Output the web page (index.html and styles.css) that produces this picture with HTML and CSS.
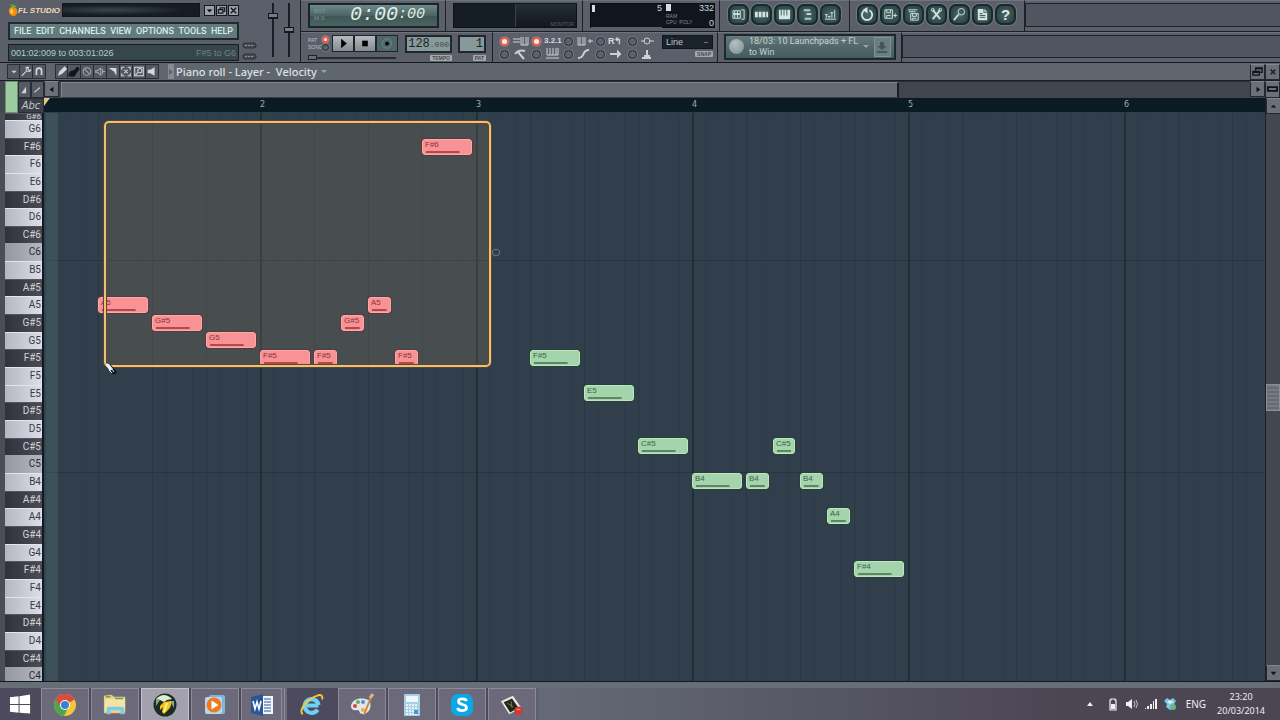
FILE: index.html
```html
<!DOCTYPE html>
<html lang="en">
<head>
<meta charset="utf-8">
<title>FL Studio - Piano roll</title>
<link rel="stylesheet" href="styles.css">
</head>
<body>
<header class="toolbar">
  <section class="main-panel">
    <div class="main-left">
      <div class="brand-row">
        <svg class="fruit" viewBox="0 0 11 15"><path d="M4 4C1 5 0 9 2 12s6 3 8-1c1-4-2-8-6-7z" fill="#f98a12"/><path d="M4 6c-2 2-2 5 0 6 2-1 3-4 0-6z" fill="#ffd34a"/><path d="M5 5L2 1l3 1 1-2 1 3 3-1-3 4z" fill="#5fb335"/></svg>
        <span class="brand">FL STUDIO</span>
        <span class="brand-display"></span>
        <span class="win-buttons">
          <button class="mini" aria-label="Minimize"><svg viewBox="0 0 10 10"><path d="M2 4h6L5 7z"/></svg></button>
          <button class="mini" aria-label="Restore"><svg viewBox="0 0 10 10"><path d="M3.500 4V2h5v4H7M1.500 4h5v4h-5z" fill="none" stroke="#15171c" stroke-width="1.300"/></svg></button>
          <button class="mini" aria-label="Close"><svg viewBox="0 0 10 10"><path d="M2 2l6 6M8 2L2 8" stroke="#15171c" stroke-width="1.500"/></svg></button>
        </span>
      </div>
      <nav class="menu">
        <button>FILE</button><button>EDIT</button><button>CHANNELS</button><button>VIEW</button><button>OPTIONS</button><button>TOOLS</button><button>HELP</button>
      </nav>
      <div class="hint"><span>001:02:009 to 003:01:026</span><span class="hint-range">F#5 to G6</span></div>
    </div>
    <div class="main-lights">
      <svg viewBox="0 0 16 22"><g fill="#474b54" stroke="#2c3037"><rect x="1" y="3" width="13" height="5" rx="2"/><rect x="1" y="14" width="13" height="5" rx="2"/></g><path d="M3 5.500h9M3 16.500h9" stroke="#90969c" stroke-dasharray="2 1"/></svg>
    </div>
    <div class="sliders">
      <input type="range" class="vslider" aria-label="Main volume" min="0" max="100" value="80">
      <input type="range" class="vslider" aria-label="Main pitch" min="0" max="100" value="51">
    </div>
  </section>
  <div class="panels">
    <div class="panel-row">
      <section class="panel time-panel"><div class="time"><span class="time-mode">BST<br>M:S</span><span class="time-big">0:00</span><span class="time-small">:00</span></div></section>
      <section class="panel scope-panel"><div class="scope"><span></span><span class="scope-label">MONITOR</span></div></section>
      <section class="panel cpu-panel"><div class="cpu"><div class="cpu-left"><span class="bar"></span><span>5</span></div><div class="cpu-right"><span class="cpu-mem"><i class="block"></i>332</span><span class="cpu-dim">RAM</span><span class="cpu-mem"><span class="cpu-dim">CPU &nbsp;POLY</span>0</span></div></div></section>
      <section class="panel shortcuts views">
        <button class="orb" aria-label="Playlist"><svg viewBox="0 0 16 16"><path d="M2 4h8v3H2zM2 8h8v4H2zM11 3h3v10h-3M4 4v8M7 4v8"/></svg></button>
        <button class="orb" aria-label="Step sequencer"><svg viewBox="0 0 16 16"><path class="solid" d="M1 5h3v6H1zM5 5h3v6H5zM9 5h3v6H9zM13 5h2v6h-2z"/></svg></button>
        <button class="orb" aria-label="Piano roll"><svg viewBox="0 0 16 16"><path class="solid" d="M2 3h2v6h1V3h2v6h1V3h2v6h1V3h3v10H2z"/></svg></button>
        <button class="orb" aria-label="Browser"><svg viewBox="0 0 16 16"><path d="M4 3h7M4 4h7M7 7h5M7 8h5M5 12h7M5 13h7"/></svg></button>
        <button class="orb" aria-label="Mixer"><svg viewBox="0 0 16 16"><path d="M2 13h12M3.500 8v4M6.500 10v2M9.500 6v6M12.500 3v9M2 8h3M5 10h3M8 6h3"/></svg></button>
      </section>
      <section class="panel shortcuts tools">
        <button class="orb" aria-label="Undo"><svg viewBox="0 0 16 16"><path class="thick" d="M5 3.500a5.500 5.500 0 1 0 5 0"/><path class="solid" d="M8 0L3 3l5 4z"/></svg></button>
        <button class="orb" aria-label="Save as"><svg viewBox="0 0 16 16"><path d="M2 3h8v9H2zM4 3v3h4V3M4 12V9h4M11 9h4M13 7v4"/></svg></button>
        <button class="orb" aria-label="Save"><svg viewBox="0 0 16 16"><path d="M5 7h8v7H5zM7 7v3h4V7M7 14v-2h4M2 3h10M3 5h7"/></svg></button>
        <button class="orb" aria-label="Cut"><svg viewBox="0 0 16 16"><path class="thick" d="M4 3l8 10M12 3L4 13"/><circle cx="4" cy="3" r="1.500"/><circle cx="12" cy="3" r="1.500"/></svg></button>
        <button class="orb" aria-label="Find"><svg viewBox="0 0 16 16"><circle cx="10" cy="5" r="3.500"/><path class="thick" d="M7 8l-5 6"/></svg></button>
        <button class="orb" aria-label="Project info"><svg viewBox="0 0 16 16"><path class="solid" d="M3 2h6v4h4v8H3zM10 2l3 3h-3z"/><path d="M5 7h3M5 9h6M5 11h6" stroke="#34504f"/></svg></button>
        <button class="orb help" aria-label="Help">?</button>
      </section>
      <section class="panel empty"><div></div></section>
    </div>
    <div class="panel-row">
      <section class="panel transport">
        <div class="transport-main">
          <div class="transport-top">
            <span class="patsong"><span>PAT</span><span>SONG</span></span>
            <span class="leds"><input type="radio" class="led" name="mode" aria-label="Pattern mode" checked><input type="radio" class="led" name="mode" aria-label="Song mode"></span>
            <button class="play" aria-label="Play"><svg viewBox="0 0 20 16"><path d="M8 3l6 5-6 5z"/></svg></button>
            <button class="play" aria-label="Stop"><svg viewBox="0 0 20 16"><path d="M7 5h6v6H7z"/></svg></button>
            <button class="play record" aria-label="Record"><svg viewBox="0 0 20 16"><circle cx="10" cy="8" r="5" fill="none" stroke="#72868a"/><circle cx="10" cy="8" r="2"/></svg></button>
          </div>
          <input type="range" class="hslider" aria-label="Song position" min="0" max="100" value="0">
        </div>
        <div class="lcd-group"><span class="lcd">128<small>.000</small></span><span class="tag">TEMPO</span></div>
        <div class="lcd-group pat"><span class="lcd">1</span><span class="tag">PAT</span></div>
      </section>
      <section class="panel toggles">
        <div class="toggle-grid">
          <label><input type="checkbox" class="led" aria-label="Typing keyboard" checked><svg viewBox="0 0 18 12"><path d="M1 4h7M1 7h7M9 2v8h7V2M11 2v8M14 2v8"/></svg></label>
          <label><input type="checkbox" class="led" aria-label="Countdown" checked><span class="count">3.2.1</span></label>
          <label><input type="checkbox" class="led" aria-label="Blend notes"><svg viewBox="0 0 18 12"><path d="M2 2v8h7V2M4 2v8M7 2v8M12 6h5M14 4v4"/></svg></label>
          <label><input type="checkbox" class="led" aria-label="Loop record"><span class="loop">R↰</span></label>
          <label><input type="checkbox" class="led" aria-label="Link"><svg viewBox="0 0 18 12"><path d="M1 6h4M9 6h5"/><circle cx="7" cy="6" r="3"/></svg></label>
          <label><input type="checkbox" class="led" aria-label="Metronome"><svg viewBox="0 0 18 12"><path class="wide" d="M3 6c3-4 6-4 10-3M6 4l6 7"/></svg></label>
          <label><input type="checkbox" class="led" aria-label="Wait"><svg viewBox="0 0 18 12"><path d="M3 0v7h11V0M6 0v7M9 0v7M12 0v7M2 10h13"/></svg></label>
          <label><input type="checkbox" class="led" aria-label="Slide"><svg viewBox="0 0 18 12"><path class="wide" d="M2 10c8 0 3-8 11-8"/></svg></label>
          <label><input type="checkbox" class="led" aria-label="Step edit"><svg viewBox="0 0 18 12"><path class="wide" d="M2 6h9M10 4l2 2-2 2z"/></svg></label>
          <label><input type="checkbox" class="led" aria-label="Multilink"><svg viewBox="0 0 18 12"><path class="wide" d="M2 10h9M7 2v6M4 8h6"/></svg></label>
        </div>
        <div class="snap"><select aria-label="Snap"><option>Line</option></select><span class="tag">SNAP</span></div>
      </section>
      <section class="panel news"><div class="news-box">
        <span class="globe"></span><span class="news-text">18/03: 10 Launchpads + FL<br>to Win</span><span class="caret"></span>
        <button class="download" aria-label="Download"><svg viewBox="0 0 14 14"><path d="M5 2h4v4h3l-5 4-5-4h3zM2 11h10v2H2z"/></svg></button>
      </div></section>
      <section class="panel empty"><div></div></section>
    </div>
  </div>
</header>

<main class="window">
  <div class="titlebar">
    <span class="tool-set">
      <button class="tool" aria-label="Options"><svg viewBox="0 0 14 14"><path class="fill" d="M4 6h6L7 9z"/></svg></button>
      <button class="tool" aria-label="Tools"><svg viewBox="0 0 14 14"><path d="M2 12l6-6M7 3c0 3 1 4 4 4l2-2-2 1-2-2 1-2c-2 0-3 0-3 1z"/></svg></button>
      <button class="tool" aria-label="Snap to grid"><svg viewBox="0 0 14 14"><path d="M4 11V6c0-4 6-4 6 0v5" stroke-width="2"/></svg></button>
    </span>
    <span class="tool-set">
      <button class="tool active" aria-label="Draw"><svg viewBox="0 0 14 14"><path class="fill" d="M2 12l2-5 6-6 3 3-6 6z"/></svg></button>
      <button class="tool" aria-label="Paint"><svg viewBox="0 0 14 14"><path class="dark" d="M1 12c0-5 4-6 6-6l4-4 2 2-4 5c0 4-4 4-8 3z"/></svg></button>
      <button class="tool" aria-label="Delete"><svg viewBox="0 0 14 14"><g class="dim"><circle cx="7" cy="7" r="4.500"/><path d="M4 4l6 6"/></g></svg></button>
      <button class="tool" aria-label="Mute"><svg viewBox="0 0 14 14"><path class="dim" d="M2 6h2l4-3v8L4 8H2zM10 4v6M10 7h3"/></svg></button>
      <button class="tool" aria-label="Slice"><svg viewBox="0 0 14 14"><path class="fill" d="M2 3h9v9L8 7z"/></svg></button>
      <button class="tool" aria-label="Select"><svg viewBox="0 0 14 14"><path d="M2 5V2h3M9 2h3v3M12 9v3H9M5 12H2V9M5 5l4 4M9 5L5 9"/></svg></button>
      <button class="tool" aria-label="Zoom"><svg viewBox="0 0 14 14"><path d="M2 2h10v10H2z"/><circle cx="8" cy="6" r="2.500"/><path d="M6 8l-3 3"/></svg></button>
      <button class="tool" aria-label="Playback"><svg viewBox="0 0 14 14"><path class="fill" d="M2 5h3l5-3v10L5 9H2z"/></svg></button>
    </span>
    <button class="expand" aria-label="Expand"><svg viewBox="0 0 6 14"><path d="M1 4l4 3-4 3z"/></svg></button>
    <h1>Piano roll - Layer -&nbsp; Velocity <span class="caret"></span></h1>
    <span class="window-buttons">
      <button class="cell" aria-label="Restore"><svg viewBox="0 0 14 14"><path d="M5 6V3h7v5h-2M2 7h7v4H2zM2 8h7M5 4h7" fill="none" stroke="#101318" stroke-width="1.400"/></svg></button>
      <button class="cell" aria-label="Close"><svg viewBox="0 0 14 14"><path d="M5 5l5 5M10 5l-5 5" stroke="#20242a" stroke-width="1.600"/></svg></button>
    </span>
  </div>

  <div class="corner">
    <span class="channel-color"></span>
    <span class="corner-tools">
      <button aria-label="Ramp"><svg viewBox="0 0 14 14"><path d="M3 11l6-8v8z" fill="#cfd3d6"/></svg></button>
      <button aria-label="Line"><svg viewBox="0 0 14 14"><path d="M3 10l7-6" stroke="#cfd3d6" stroke-width="1.600"/></svg></button>
      <button class="abc">Abc</button>
    </span>
  </div>
  <div class="hscroll">
    <button class="cell" aria-label="Scroll left"><svg viewBox="0 0 14 14"><path d="M9 4v6L5 7z"/></svg></button>
    <div class="hscroll-track"><span class="hscroll-thumb"></span></div>
    <button class="cell" aria-label="Scroll right"><svg viewBox="0 0 14 14"><path d="M6 4v6l4-3z"/></svg></button>
  </div>
  <button class="cell zoom-cell" aria-label="Zoom"><svg viewBox="0 0 14 14"><path d="M2 4.500h10v4H2z" fill="none" stroke="#101318" stroke-width="2"/></svg></button>
  <div class="ruler"><span class="marker"></span><span>2</span><span>3</span><span>4</span><span>5</span><span>6</span></div>

  <div class="keys">
    <div class="octave partial">
      <span class="black">G#6</span><span>G6</span><span class="black">F#6</span><span>F6</span><span>E6</span><span class="black">D#6</span><span>D6</span><span class="black">C#6</span><span class="c">C6</span>
    </div>
    <div class="octave">
      <span>B5</span><span class="black">A#5</span><span>A5</span><span class="black">G#5</span><span>G5</span><span class="black">F#5</span><span>F5</span><span>E5</span><span class="black">D#5</span><span>D5</span><span class="black">C#5</span><span class="c">C5</span>
    </div>
    <div class="octave">
      <span>B4</span><span class="black">A#4</span><span>A4</span><span class="black">G#4</span><span>G4</span><span class="black">F#4</span><span>F4</span><span>E4</span><span class="black">D#4</span><span>D4</span><span class="black">C#4</span><span class="c">C4</span>
    </div>
  </div>

  <div class="canvas">
    <div class="selection-fill"></div>
    <div class="note pink" style="left:54px;top:184px;width:50px">A5</div>
    <div class="note pink" style="left:108px;top:202px;width:50px">G#5</div>
    <div class="note pink" style="left:162px;top:219px;width:50px">G5</div>
    <div class="note pink" style="left:216px;top:237px;width:50px">F#5</div>
    <div class="note pink" style="left:270px;top:237px;width:23px">F#5</div>
    <div class="note pink" style="left:297px;top:202px;width:23px">G#5</div>
    <div class="note pink" style="left:324px;top:184px;width:23px">A5</div>
    <div class="note pink" style="left:351px;top:237px;width:23px">F#5</div>
    <div class="note pink" style="left:378px;top:26px;width:50px">F#6</div>
    <div class="note" style="left:486px;top:237px;width:50px">F#5</div>
    <div class="note" style="left:540px;top:272px;width:50px">E5</div>
    <div class="note" style="left:594px;top:325px;width:50px">C#5</div>
    <div class="note" style="left:648px;top:360px;width:50px">B4</div>
    <div class="note" style="left:702px;top:360px;width:23px">B4</div>
    <div class="note" style="left:729px;top:325px;width:22px">C#5</div>
    <div class="note" style="left:756px;top:360px;width:23px">B4</div>
    <div class="note" style="left:783px;top:395px;width:23px">A4</div>
    <div class="note" style="left:810px;top:448px;width:50px">F#4</div>
    <div class="selection"></div>
    <span class="ring"></span>
    <svg class="cursor" viewBox="0 0 14 14"><path d="M1 1l5 1 7 8-3 3-7-7z" fill="#10171d"/><path d="M1 1l4 1 4 5-3 2-4-5z" fill="#f4f1ee"/><path d="M5 8l3 3M7 6l3 4" stroke="#e4e4e4"/></svg>
  </div>
  <div class="vscroll">
    <button class="cell" aria-label="Scroll up"><svg viewBox="0 0 14 14"><path d="M4 8h6L7 5z"/></svg></button>
    <div class="vscroll-track"><span class="vscroll-thumb"></span></div>
    <button class="cell" aria-label="Scroll down"><svg viewBox="0 0 14 14"><path d="M4 5h6L7 9z"/></svg></button>
  </div>
</main>

<footer class="taskbar">
  <button class="start" aria-label="Start"><svg viewBox="0 0 24 22"><path fill="#fff" d="M1 4l9-1v8H1zM11 3l11-2v10H11zM1 12h9v8l-9-1zM11 12h11v9l-11-1z"/></svg></button>
  <button class="task" aria-label="Chrome"><svg viewBox="0 0 24 24"><circle cx="12" cy="12" r="11" fill="#f2c53b"/><path d="M12 12L2.500 6.500A11 11 0 0 1 21.500 6.500z" fill="#dd4b3e"/><path d="M2.500 6.500A11 11 0 0 0 11 23l4-8-6-1z" fill="#4aa653"/><path d="M12 6.500h9.500a11 11 0 0 0-19-.1L8 14z" fill="#dd4b3e"/><circle cx="12" cy="12" r="5" fill="#fff"/><circle cx="12" cy="12" r="4" fill="#3b80d0"/></svg></button>
  <button class="task" aria-label="Explorer"><svg viewBox="0 0 26 24"><path d="M1 2l8-1 3 2h12v18H1z" fill="#e2cc86"/><path d="M2 5h22v14H2z" fill="#f3e3a4"/><path d="M3 3h5M13 5h9" stroke="#6aa24c" stroke-width="1.500"/><path d="M4 22v-6q0-2 2-2h15q2 0 2 2v6h-4v-4H8v4z" fill="#7fcbe6"/></svg></button>
  <button class="task current" aria-label="FL Studio"><svg viewBox="0 0 24 24"><circle cx="12" cy="12" r="11.500" fill="#1d2d26"/><path d="M3 6q8-8 16 0l-5 1-3 2-4-2z" fill="#dfeccf"/><path d="M3 6l4 1-4 6zM21 8l-4 0 4 7z" fill="#8ba786"/><path d="M7 13l4-4 7-1q1 4-2 8l-5 5-2-2 1-5-3 3z" fill="#f5c518"/><path d="M14 10l-3 9" stroke="#fff09a" stroke-width="2"/></svg></button>
  <button class="task" aria-label="Media player"><svg viewBox="0 0 24 24"><rect x="6" y="2" width="16" height="19" rx="2" fill="#7fb6dd"/><rect x="2" y="4" width="17" height="17" rx="2" fill="#b9d8ec"/><circle cx="11" cy="12" r="7.500" fill="#ee7b22"/><path d="M8.500 7.500l7 4.500-7 4.500z" fill="#fff"/></svg></button>
  <button class="task stacked" aria-label="Word"><svg viewBox="0 0 24 24"><path d="M11 3h12v18H11z" fill="#f2f5fa"/><path d="M14 6h7M14 9h7M14 12h7M14 15h7M14 18h7" stroke="#2a5699"/><path d="M1 4l12-3v22L1 20z" fill="#2a5699"/><path d="M3 8l2 8 2-7 2 7 2-8" fill="none" stroke="#fff" stroke-width="1.600"/></svg></button>
  <button class="task plain" aria-label="Internet Explorer"><svg viewBox="0 0 26 24"><path d="M5 12.500h15M20 12a7.500 7.500 0 1 0-1 5" fill="none" stroke="#6fd0f5" stroke-width="4.500"/><path d="M3 22C-2 18 8 5 18 2c5-2 7 0 6 4" fill="none" stroke="#f1cb34" stroke-width="2"/></svg></button>
  <button class="task" aria-label="Paint"><svg viewBox="0 0 24 24"><path d="M1 13C2 5 12 4 19 7c4 6 0 14-6 14-5 0-2-4-6-4-4 1-6-1-6-4z" fill="#e3e5e6"/><circle cx="5" cy="13" r="2" fill="#d6493f"/><circle cx="8" cy="9" r="2" fill="#5bb05b"/><circle cx="13" cy="9" r="2" fill="#4b92d1"/><circle cx="13" cy="17" r="2" fill="#e6b04a"/><path d="M14 22l7-18" stroke="#c98846" stroke-width="2"/><path d="M20 5l3-4" stroke="#dcb184" stroke-width="3"/></svg></button>
  <button class="task" aria-label="Calculator"><svg viewBox="0 0 24 24"><rect x="4" y="1" width="16" height="22" rx="1" fill="#a9cfe6"/><path d="M6 3h12v6H6z" fill="#eef6fb"/><path d="M6 12h12M6 15h12M6 18h12M6 21h12" stroke="#e6f2f9" stroke-width="2" stroke-dasharray="2 1"/><path d="M14 17h4v4h-4z" fill="#4f95c8"/></svg></button>
  <button class="task" aria-label="Skype"><svg viewBox="0 0 24 24"><rect x="1" y="1" width="22" height="22" rx="7" fill="#0aa8e6"/><path d="M16.500 8c-1-3-8-3-8 .5 0 4 8 2 8 6 0 4-8 4-9 .5" fill="none" stroke="#fff" stroke-width="2.800"/></svg></button>
  <button class="task" aria-label="Screen recorder"><svg viewBox="0 0 26 24"><path d="M1 8l13-6 9 13-13 7z" fill="#e7e7e4"/><path d="M4 9l9-4 7 10-9 5z" fill="#1d281a"/><path d="M8 10l6 4M12 8l1 7" stroke="#6f8c4a"/><circle cx="20" cy="18" r="4.500" fill="#d8362f"/><path d="M18 17h4" stroke="#f3a29c"/></svg></button>
  <div class="tray">
    <svg class="tray-arrow" viewBox="0 0 8 8"><path d="M1 6h6L4 2z"/></svg>
    <svg viewBox="0 0 14 14"><path d="M5 2h4v1h1v10H4V3h1z" fill="none" stroke="#f0eef2" stroke-width="1.200"/><path d="M5 7h4v5H5z"/></svg>
    <svg viewBox="0 0 14 14"><path d="M1 5h2l4-3v10L3 9H1z"/><path d="M9 4q2 3 0 6M11 3q3 4 0 8" fill="none" stroke="#c4c0c8"/></svg>
    <svg viewBox="0 0 14 14"><path d="M1 11h1v1H1zM3 9h2v3H3zM6 7h2v5H6zM9 4h1v8H9zM11 2h2v10h-2z"/></svg>
    <svg viewBox="0 0 14 14"><path fill="#7cc9e4" d="M1 4l3-3 3 2 3-2 3 3-2 3 1 3-5 3-4-3 1-3z"/><path fill="#d9f0f8" d="M4 5l3-2 3 2-3 2z"/><circle cx="10" cy="10" r="3" fill="#6bb38b"/></svg>
    <span class="lang">ENG</span>
    <time class="clock">23:20<br>20/03/2014</time>
  </div>
</footer>
</body>
</html>
```
FILE: styles.css
```css
* { box-sizing: border-box; }
body {
  margin: 0;
  height: 100vh;
  display: flex;
  flex-direction: column;
  overflow: hidden;
  background: #50555e;
  font-family: "Liberation Sans", sans-serif;
}
button, input, select { margin: 0; padding: 0; border: 0; font: inherit; color: inherit; background: none; }
svg { display: block; }

/* Toolbar */
.toolbar { display: flex; flex: none; height: 63px; background: #5a5f69; border-bottom: 1px solid #14181e; }
.main-panel { display: flex; flex: none; width: 301px; padding: 2px 0 0 8px; border-right: 1px solid #1b1f26; }
.main-left { display: flex; flex-direction: column; gap: 4px; width: 231px; }
.brand-row { display: flex; align-items: center; height: 16px; }
.fruit { width: 10px; height: 14px; flex: none; }
.brand { flex: none; font: italic bold 8px "Liberation Sans", sans-serif; color: #f0dcb8; white-space: nowrap; }
.brand-display { flex: 1; height: 14px; margin-left: 2px; background: radial-gradient(ellipse at 35% 50%, #3a464c, #151d23 60%); border: 1px solid #12161b; }
.win-buttons { display: flex; gap: 1px; margin-left: 4px; }
.mini { width: 11px; height: 11px; background: #9aa0a8; border: 1px solid #15171c; }
.mini svg { width: 9px; height: 9px; }
.menu { display: flex; justify-content: space-between; align-items: center; height: 18px; padding: 0 4px; background: #647b7e; border: 2px solid #1d2a30; font: 500 9px Roboto, sans-serif; color: #d9ebe9; }
.hint { display: flex; justify-content: space-between; align-items: center; height: 17px; padding: 0 2px; background: #36474c; border: 1px solid #161e24; font-size: 9px; color: #b9cac9; }
.hint-range { color: #71807f; }
.main-lights { display: flex; align-items: flex-end; width: 28px; padding-left: 3px; }
.main-lights svg { width: 16px; height: 22px; }
.sliders { display: flex; gap: 4px; padding-top: 1px; }
.vslider { width: 12px; height: 54px; writing-mode: vertical-lr; direction: rtl; appearance: none; background: linear-gradient(90deg, transparent 5px, #1b1f25 5px, #1b1f25 7px, transparent 7px); }
.vslider::-webkit-slider-thumb { appearance: none; width: 10px; height: 6px; background: #777d85; border: 1px solid #15191f; border-bottom-width: 2px; }

.panels { flex: 1; min-width: 0; display: flex; flex-direction: column; }
.panel-row { display: flex; flex: 1; min-height: 0; border-bottom: 1px solid #1b1f26; }
.panel-row:last-child { border-bottom: 0; }
.panel { flex: none; border-right: 1px solid #1b1f26; border-top: 1px solid #6e747d; }
.time-panel { width: 145px; padding: 2px 6px 3px 7px; }
.time { height: 100%; display: flex; align-items: center; padding: 0 12px 0 4px; background: linear-gradient(#6f8987, #4b6463 50%, #3d5554 51%, #4b6462); border: 2px solid #1a2529; color: #e1efeb; font-family: "Liberation Mono", monospace; font-style: italic; }
.time-mode { flex: 1; font: 6px/7px "Liberation Sans", sans-serif; color: #7d9591; }
.time-big { font-size: 20px; line-height: 20px; }
.time-small { font-size: 15px; line-height: 20px; }
.scope-panel { width: 137px; padding: 2px 5px 3px 7px; }
.scope { height: 100%; display: grid; grid-template-columns: 1fr 1fr; background: #151d25; border: 1px solid #0d1218; }
.scope-label { border-left: 1px solid #39424b; color: #59636b; font-size: 5px; display: flex; align-items: flex-end; justify-content: flex-end; padding-right: 2px; background: linear-gradient(#252d36, #12181f); }
.cpu-panel { width: 137px; padding: 2px 4px 3px 7px; }
.cpu { height: 100%; display: grid; grid-template-columns: 71px 1fr; gap: 4px; background: #0f161d; border: 1px solid #0a0f14; color: #cdd6d8; font-size: 9px; line-height: 9px; }
.cpu-left { display: flex; justify-content: space-between; border-bottom: 1px solid #57616a; }
.bar { width: 3px; height: 7px; margin: 1px; background: #d7dddf; }
.cpu-right { display: flex; flex-direction: column; }
.cpu-mem { display: flex; justify-content: space-between; }
.cpu-dim { font-size: 5px; line-height: 6px; color: #848d92; }
.block { width: 5px; height: 7px; background: #d7dddf; }
.shortcuts { display: flex; align-items: center; gap: 2px; padding: 0 7px 2px 8px; }
.views { width: 130px; }
.tools { width: 175px; padding-left: 7px; }
.orb { flex: none; width: 21px; height: 21px; border: 2px solid #182a2e; border-radius: 7px; background: radial-gradient(#4c6968, #243c3e); box-shadow: 0 0 0 1px #6f7880; color: #dcebe6; display: grid; place-items: center; }
.orb svg { width: 15px; height: 15px; fill: none; stroke: #cfe0da; stroke-width: 1; }
.orb .solid { fill: #d5e5df; stroke: none; }
.orb .thick { stroke-width: 2; }
.help { font-size: 15px; line-height: 15px; font-weight: bold; }
.empty { flex: 1; padding: 2px 0 4px; border-right: 0; }
.empty div { height: 100%; background: #50555f; border: 1px solid #1d222a; border-right: 0; }

.transport { display: flex; width: 192px; padding: 2px 5px 0 7px; gap: 6px; }
.transport-main { width: 91px; }
.transport-top { display: flex; align-items: center; height: 18px; }
.patsong { display: flex; flex-direction: column; width: 14px; font-size: 5px; line-height: 7px; color: #bec3c7; }
.leds { display: flex; flex-direction: column; gap: 1px; width: 10px; }
.led { appearance: none; flex: none; width: 7px; height: 7px; border: 1px solid #20242b; border-radius: 50%; background: #5d626b; box-shadow: 0 0 0 1px #737982; }
.led:checked { background: #fff1ea; border: 2px solid #ee5b4b; }
.play { flex: none; width: 22px; height: 17px; background: linear-gradient(#b6bac0, #858a92); border: 1px solid #20242a; }
.play svg { width: 20px; height: 15px; }
.record { background: #4f6669; }
.hslider { display: block; width: 88px; height: 10px; appearance: none; background: linear-gradient(transparent 4px, #262b32 4px, #262b32 6px, transparent 6px); }
.hslider::-webkit-slider-thumb { appearance: none; width: 9px; height: 5px; background: #686e77; border: 1px solid #1d2128; }
.lcd-group { display: flex; flex-direction: column; align-items: flex-end; width: 47px; }
.pat { width: 28px; }
.lcd { width: 100%; height: 18px; padding: 0 1px; background: #879999; border: 2px solid #20272c; color: #182326; font: 12px/14px "Liberation Mono", monospace; text-align: right; white-space: nowrap; }
.lcd small { font-size: 8px; color: #3f4f51; }
.tag { padding: 0 2px; font-size: 5px; line-height: 6px; font-weight: bold; color: #454a53; background: #a3a8ad; border-radius: 1px; margin-top: 2px; }
.toggles { display: flex; width: 225px; padding: 2px 4px 0 7px; }
.toggle-grid { display: grid; grid-template-columns: repeat(5, 32px); grid-auto-rows: 13px; }
.toggle-grid label { display: flex; align-items: center; gap: 3px; font: bold 9px/10px "Liberation Sans", sans-serif; color: #d7dbde; white-space: nowrap; }
.toggle-grid .count { font-size: 8px; }
.toggle-grid .led { width: 9px; height: 9px; }
.toggle-grid svg { width: 18px; height: 12px; fill: none; stroke: #cdd1d4; stroke-width: 1; }
.toggle-grid .wide { stroke-width: 2; }
.snap { display: flex; flex-direction: column; align-items: flex-end; width: 53px; }
.snap select { width: 51px; height: 14px; padding: 0 3px; appearance: none; background: #1a222a linear-gradient(#6c7379, #6c7379) no-repeat 41px 6px / 4px 1px; border: 1px solid #10161c; color: #c0c6c9; font-size: 9px; }
.news { width: 184px; padding: 1px 5px 2px 6px; }
.news-box { height: 100%; display: flex; align-items: center; gap: 5px; padding: 0 3px; border: 2px solid #1d282d; background: linear-gradient(#66797b, #526769 50%, #465b5d); }
.globe { flex: none; width: 15px; height: 15px; border-radius: 50%; background: radial-gradient(circle at 40% 30%, #b4c1c2, #7b8d8f); }
.news-text { flex: 1; color: #c4d3d2; font: 9px/11px Roboto, sans-serif; white-space: nowrap; }
.caret { flex: none; border: 3px solid transparent; border-top-color: #97a3a5; border-bottom: 0; }
.download { flex: none; width: 17px; height: 20px; background: #6b7e7f; border: 1px solid #829292; }
.download svg { width: 14px; height: 14px; fill: #43575a; }

/* Piano roll window */
.window {
  flex: 1;
  min-height: 0;
  display: grid;
  grid-template-columns: 44px minmax(0, 1fr) 15px;
  grid-template-rows: 18px 17px 15px minmax(0, 1fr);
  border-bottom: 1px solid #15191f;
  background: #4a4e57;
}
.titlebar { grid-column: 1 / -1; display: flex; align-items: center; gap: 9px; padding-left: 7px; background: #60666e; border-bottom: 1px solid #1b1f25; }
.tool-set { display: flex; }
.tool { width: 13px; height: 15px; background: #535962; border: 1px solid #292e36; border-left-width: 0; }
.tool-set .tool:first-child { border-left-width: 1px; }
.tool svg { width: 12px; height: 13px; fill: none; stroke: #d4d8da; stroke-width: 1.2; }
.tool .fill { fill: #d4d8da; stroke: none; }
.tool .dark { fill: #11161b; stroke: #11161b; }
.tool .dim { stroke: #a3a8ac; }
.expand { width: 6px; height: 15px; margin-right: -7px; background: #858b92; }
.expand svg { width: 6px; height: 14px; fill: #5d636b; }
h1 { flex: 1; display: flex; align-items: center; gap: 4px; margin: 0; font: 500 11px/16px "Noto Sans", sans-serif; color: #dce0e2; white-space: nowrap; }
.window-buttons { display: flex; }
.cell { flex: none; display: grid; place-items: center; width: 15px; height: 16px; background: #6b7078; border: 1px solid #23272e; border-top-color: #81868d; fill: #101318; }
.cell svg { width: 13px; height: 13px; }

.corner { grid-row: span 2; display: flex; padding-left: 5px; background: #43474f; }
.channel-color { width: 13px; background: #9ccb9f; border: 1px solid #6c8f71; }
.corner-tools { flex: 1; display: grid; grid-template-columns: 1fr 1fr; grid-template-rows: 17px 15px; }
.corner-tools button { border: 1px solid #292d34; background: #555a63; }
.corner-tools svg { width: 11px; height: 14px; }
.corner-tools .abc { grid-column: span 2; font: italic 10px/12px "DejaVu Sans", sans-serif; color: #c2c7ca; background: #3b4048; }
.hscroll { display: flex; background: #40464e; }
.hscroll-track { flex: 1; display: flex; padding-left: 2px; border-top: 1px solid #2c3138; }
.hscroll-thumb { width: 70.5%; background: #666b73; border: 1px solid #80858c; border-right: 2px solid #1a1e24; border-bottom-color: #3a3f46; }
.zoom-cell { height: 17px; }
.ruler { grid-column: 2; display: grid; grid-template-columns: repeat(6, 216px); overflow: hidden; background: #0b1b23; border-bottom: 1px solid #26414a; color: #a0adb1; font: 8px/14px "DejaVu Sans", sans-serif; }
.marker { width: 0; height: 0; border-top: 8px solid #e9c585; border-right: 6px solid transparent; }

.keys { grid-column: 1; overflow: hidden; margin-left: 5px; border-right: 2px solid #101a20; }
.octave { display: grid; grid-template-rows: repeat(12, 1fr); height: 212px; font: 10px/17px Roboto, sans-serif; text-align: right; color: #373a44; }
.partial { height: 148px; grid-template-rows: 7px repeat(8, 1fr); }
.octave span { padding-right: 1px; min-height: 0; background: linear-gradient(90deg, #b4b7c2, #dcdee8); box-shadow: inset 0 1px #e3e5ec; }
.octave .black { background: linear-gradient(90deg, #30313a, #4b4d56); color: #d2d4da; box-shadow: inset 0 1px #55575f; }
.octave .c { background: linear-gradient(90deg, #9598a1, #b5b7c0); box-shadow: none; color: #282b33; }
.partial span:first-child { font-size: 8px; line-height: 7px; }

.canvas {
  position: relative;
  overflow: hidden;
  background:
    linear-gradient(90deg, rgba(82, 105, 113, .4) 14px, transparent 14px),
    repeating-linear-gradient(90deg, #1f2e39 0 2px, transparent 2px 216px),
    repeating-linear-gradient(90deg, #283743 0 1px, transparent 1px 54px),
    repeating-linear-gradient(90deg, rgba(20, 35, 45, .08) 0 1px, transparent 1px calc(54px / 4)),
    linear-gradient(#243440, #243440) 0 147px / 100% 1px no-repeat,
    linear-gradient(#243440, #243440) 0 359px / 100% 1px no-repeat,
    #303f4b;
}
.note {
  position: absolute;
  height: 16px;
  padding-left: 2px;
  border: 1px solid #bfe5c5;
  border-radius: 3px;
  background: linear-gradient(#5d8764, #5d8764) 3px 11px / 70% 2px no-repeat, #a4d4ac;
  box-shadow: 0 0 0 1px #264238;
  color: #3d6447;
  font: 8px/10px "Liberation Sans", sans-serif;
  overflow: hidden;
}
.pink { background: linear-gradient(#b4494d, #b4494d) 3px 11px / 70% 2px no-repeat, #f99294; border-color: #fca9a8; color: #8a3238; box-shadow: 0 0 0 1px #513c42; }
.selection-fill, .selection { position: absolute; left: 60px; top: 8px; width: 387px; height: 246px; border-radius: 5px; }
.selection-fill { background: rgba(200, 160, 110, .16); }
.selection { border: 2px solid #f0bf78; box-shadow: 0 0 0 1px #59482f, inset 0 0 0 1px #59482f; }
.ring { position: absolute; left: 448px; top: 136px; width: 8px; height: 7px; border: 1px solid #667681; border-radius: 3px; }
.cursor { position: absolute; left: 60px; top: 249px; width: 14px; height: 14px; }

.vscroll { display: flex; flex-direction: column; grid-column: 3; grid-row: 3 / 5; background: #43484f; border-left: 1px solid #1b1f26; }
.vscroll-track { flex: 1; display: flex; flex-direction: column; justify-content: center; padding-top: 16px; }
.vscroll-thumb { height: 27px; border: 1px solid #8a8f96; background: repeating-linear-gradient(#767b82 0 2px, #666b73 2px 4px); }

/* Taskbar */
.taskbar {
  flex: none;
  display: flex;
  height: 38px;
  border-top: 6px solid #686e77;
  background: linear-gradient(90deg, #4d4a5d, #4d4a5d 530px, #646a77 540px, #4c4653 1060px);
}
.start { width: 41px; display: grid; place-items: center; }
.start svg { width: 23px; height: 22px; }
.task { flex: none; width: 48px; margin-right: 2px; display: grid; place-items: center; background: #6b697a; border: 1px solid #8d8b9a; border-width: 1px 1px 0; }
.task svg { width: 24px; height: 24px; }
.current { background: #a2a1ad; border-color: #c1c0ca; }
.stacked { width: 41px; margin-right: 6px; box-shadow: 2px 0 #6b697a, 3px 0 #8d8b9a, 5px 0 #6b697a; }
.plain { background: none; border-color: transparent; }
.tray { flex: 1; display: flex; justify-content: flex-end; align-items: center; gap: 5px; padding-right: 15px; color: #f0eef2; font: 10px/14px "Noto Sans", sans-serif; }
.tray svg { width: 14px; height: 14px; fill: #f0eef2; }
.tray .tray-arrow { width: 8px; height: 8px; margin-right: 7px; }
.lang { margin: 0 6px 0 4px; }
.clock { text-align: center; font-size: 9px; }
```
